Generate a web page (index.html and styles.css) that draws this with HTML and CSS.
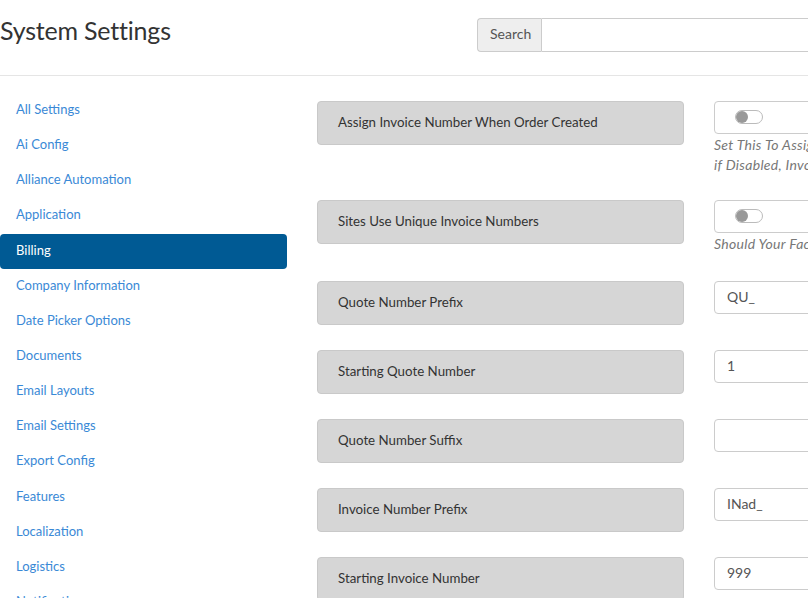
FILE: index.html
```html
<!DOCTYPE html>
<html>
<head>
<meta charset="utf-8">
<link rel="stylesheet" href="styles.css">
</head>
<body>
<div class="page">
  <header class="header">
    <h1 class="title">System Settings</h1>
    <div class="search">
      <span class="search-addon">Search</span>
      <input class="search-input" type="text">
    </div>
  </header>
  <div class="body">
    <nav class="sidebar">
      <a class="nav-item">All Settings</a>
      <a class="nav-item">Ai Config</a>
      <a class="nav-item">Alliance Automation</a>
      <a class="nav-item">Application</a>
      <a class="nav-item active">Billing</a>
      <a class="nav-item">Company Information</a>
      <a class="nav-item">Date Picker Options</a>
      <a class="nav-item">Documents</a>
      <a class="nav-item">Email Layouts</a>
      <a class="nav-item">Email Settings</a>
      <a class="nav-item">Export Config</a>
      <a class="nav-item">Features</a>
      <a class="nav-item">Localization</a>
      <a class="nav-item">Logistics</a>
      <a class="nav-item">Notifications</a>
    </nav>
    <main class="settings">
      <div class="row">
        <div class="label">Assign Invoice Number When Order Created</div>
        <div class="control">
          <div class="field"><span class="toggle"><span class="knob"></span></span></div>
          <div class="help">Set This To Assign An Invoice Number When The Order Is Created,<br>if Disabled, Invoice Numbers Are Assigned When Invoiced</div>
        </div>
      </div>
      <div class="row">
        <div class="label">Sites Use Unique Invoice Numbers</div>
        <div class="control">
          <div class="field"><span class="toggle"><span class="knob"></span></span></div>
          <div class="help">Should Your Facilities Use Unique Invoice Numbers</div>
        </div>
      </div>
      <div class="row">
        <div class="label">Quote Number Prefix</div>
        <div class="control"><input class="field text" type="text" value="QU_"></div>
      </div>
      <div class="row">
        <div class="label">Starting Quote Number</div>
        <div class="control"><input class="field text" type="text" value="1"></div>
      </div>
      <div class="row">
        <div class="label">Quote Number Suffix</div>
        <div class="control"><input class="field text" type="text" value=""></div>
      </div>
      <div class="row">
        <div class="label">Invoice Number Prefix</div>
        <div class="control"><input class="field text" type="text" value="INad_"></div>
      </div>
      <div class="row">
        <div class="label">Starting Invoice Number</div>
        <div class="control"><input class="field text" type="text" value="999"></div>
      </div>
    </main>
  </div>
</div>
</body>
</html>
```
FILE: styles.css
```css
html, body {
  margin: 0;
  padding: 0;
  overflow: hidden;
  background: #fff;
}
body {
  font-family: Lato, "Open Sans", sans-serif;
  font-size: 14px;
  color: #333;
}
.page {
  width: 1200px;
}
.header {
  display: flex;
  align-items: flex-start;
  height: 76px;
  border-bottom: 1px solid #e5e5e5;
  box-sizing: border-box;
}
.title {
  margin: 15px 0 0 0;
  width: 477px;
  font-weight: 400;
  font-size: 25px;
  line-height: 30px;
  color: #333;
  letter-spacing: -0.2px;
}
.search {
  margin-top: 18px;
  display: flex;
  height: 34px;
  width: 600px;
}
.search-addon {
  display: flex;
  align-items: center;
  padding: 0 12px 4px 12px;
  width: 64px;
  box-sizing: border-box;
  background: #eee;
  border: 1px solid #ccc;
  border-right: none;
  border-radius: 4px 0 0 4px;
  color: #555;
  font-size: 14px;
}
.search-input {
  flex: 1;
  margin: 0;
  border: 1px solid #ccc;
  border-radius: 0 4px 4px 0;
  height: 34px;
  box-sizing: border-box;
}
.body {
  display: flex;
  padding-top: 17px;
}
.sidebar {
  width: 287px;
  display: flex;
  flex-direction: column;
  flex-shrink: 0;
}
.nav-item {
  display: block;
  height: 35.15px;
  line-height: 33px;
  padding-left: 16px;
  color: #3a89d6;
  font-size: 13px;
  border-radius: 4px;
  text-decoration: none;
}
.nav-item.active {
  background: #005a94;
  color: #fff;
}
.settings {
  margin-left: 30px;
  padding-top: 8px;
  display: flex;
  flex-direction: column;
}
.row {
  display: flex;
  align-items: flex-start;
  margin-bottom: 25px;
}
.label {
  width: 367px;
  height: 44px;
  box-sizing: border-box;
  background: #d6d6d6;
  border: 1px solid #c9c9c9;
  border-radius: 4px;
  padding: 0 0 3px 20px;
  display: flex;
  align-items: center;
  color: #333;
  font-size: 13.3px;
  flex-shrink: 0;
}
.control {
  margin-left: 30px;
  width: 420px;
}
.field {
  display: flex;
  align-items: center;
  height: 33px;
  width: 100%;
  box-sizing: border-box;
  border: 1px solid #ccc;
  border-radius: 4px;
  padding: 0 12px 2px 12px;
  margin: 0;
  background: #fff;
}
.text {
  font-family: Lato, "Open Sans", sans-serif;
  font-size: 14px;
  color: #555;
}
.toggle {
  margin-left: 8px;
  width: 28px;
  height: 14px;
  border: 1px solid #bbb;
  border-radius: 8px;
  box-sizing: border-box;
  position: relative;
  background: #fff;
}
.knob {
  position: absolute;
  left: 0;
  top: 0;
  width: 12px;
  height: 12px;
  border-radius: 50%;
  background: #999;
}
.help {
  margin-top: 1px;
  font-style: italic;
  color: #777;
  line-height: 20px;
  font-size: 14px;
  letter-spacing: 0.3px;
  white-space: nowrap;
}
.row + .row .help {
  margin-bottom: 2px;
}
```
